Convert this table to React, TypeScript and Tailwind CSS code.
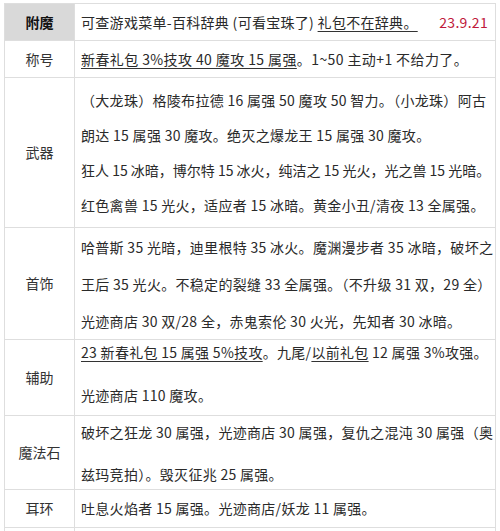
import React from "react";

function Row({
  label,
  h,
  header,
  contentClass,
  children,
}: {
  label: string;
  h: string;
  header?: boolean;
  contentClass?: string;
  children?: React.ReactNode;
}) {
  return (
    <div className={`flex border-b border-[#dedede] ${h}`}>
      <div
        className={`w-[70px] shrink-0 border-r border-[#dedede] flex items-center justify-center ${
          header ? "bg-[#d9d9d9] font-bold text-[#111]" : "text-[#333]"
        }`}
      >
        {label}
      </div>
      <div className={`flex-1 min-w-0 border-r border-[#dedede] pl-[6px] ${contentClass ?? ""}`}>{children}</div>
    </div>
  );
}

const U = ({ children }: { children: React.ReactNode }) => (
  <span className="underline underline-offset-[3px] decoration-1 decoration-[#333]">{children}</span>
);

export default function App() {
  return (
    <div className="w-[500px] h-[531px] overflow-hidden bg-white font-['Noto_Sans_CJK_SC',sans-serif] text-[14px] text-[#2a2a2a]">
      <div className="ml-[4px] mt-[3px] w-[492px] border-l border-t border-[#dedede]">
        <Row label="附魔" h="h-[37px]" header contentClass="flex items-center justify-between pr-[7px] tracking-[0.3px]">
          <span className="whitespace-nowrap">
            可查游戏菜单-百科辞典 (可看宝珠了) <U>礼包不在辞典。</U>
          </span>
          <span className="text-[#c0193a]">23.9.21</span>
        </Row>
        <Row label="称号" h="h-[37px]" contentClass="flex items-center tracking-[0.4px]">
          <span className="whitespace-nowrap">
            <U>新春礼包 3%技攻 40 魔攻 15 属强</U>。1~50 主动+1 不给力了。
          </span>
        </Row>
        <Row label="武器" h="h-[150px]" contentClass="pt-[5px] leading-[35px] whitespace-nowrap tracking-[0.3px]">
          <div>（大龙珠）格陵布拉德 16 属强 50 魔攻 50 智力。（小龙珠）阿古</div>
          <div>朗达 15 属强 30 魔攻。绝灭之爆龙王 15 属强 30 魔攻。</div>
          <div className="tracking-[0px]">狂人 15 冰暗，博尔特 15 冰火，纯洁之 15 光火，光之兽 15 光暗。</div>
          <div>红色禽兽 15 光火，适应者 15 冰暗。黄金小丑/清夜 13 全属强。</div>
        </Row>
        <Row label="首饰" h="h-[112px]" contentClass="pt-[1px] leading-[37px] whitespace-nowrap tracking-[0.3px]">
          <div>哈普斯 35 光暗，迪里根特 35 冰火。魔渊漫步者 35 冰暗，破坏之</div>
          <div>王后 35 光火。不稳定的裂缝 33 全属强。（不升级 31 双，29 全）</div>
          <div>光迹商店 30 双/28 全，赤鬼索伦 30 火光，先知者 30 冰暗。</div>
        </Row>
        <Row label="辅助" h="h-[76px]" contentClass="leading-[24px] whitespace-nowrap tracking-[0.3px]">
          <div>
            <U>23 新春礼包 15 属强 5%技攻</U>。九尾/<U>以前礼包</U> 12 属强 3%攻强。
          </div>
          <div className="mt-[19px]">光迹商店 110 魔攻。</div>
        </Row>
        <Row label="魔法石" h="h-[74px]" contentClass="pt-[4px] leading-[24px] whitespace-nowrap tracking-[0.3px]">
          <div>破坏之狂龙 30 属强，光迹商店 30 属强，复仇之混沌 30 属强（奥</div>
          <div className="mt-[18px]">兹玛竞拍）。毁灭征兆 25 属强。</div>
        </Row>
        <Row label="耳环" h="h-[38px]" contentClass="flex items-center tracking-[0.3px]">
          <span className="whitespace-nowrap">吐息火焰者 15 属强。光迹商店/妖龙 11 属强。</span>
        </Row>
        <Row label="" h="h-[40px]" />
      </div>
    </div>
  );
}
